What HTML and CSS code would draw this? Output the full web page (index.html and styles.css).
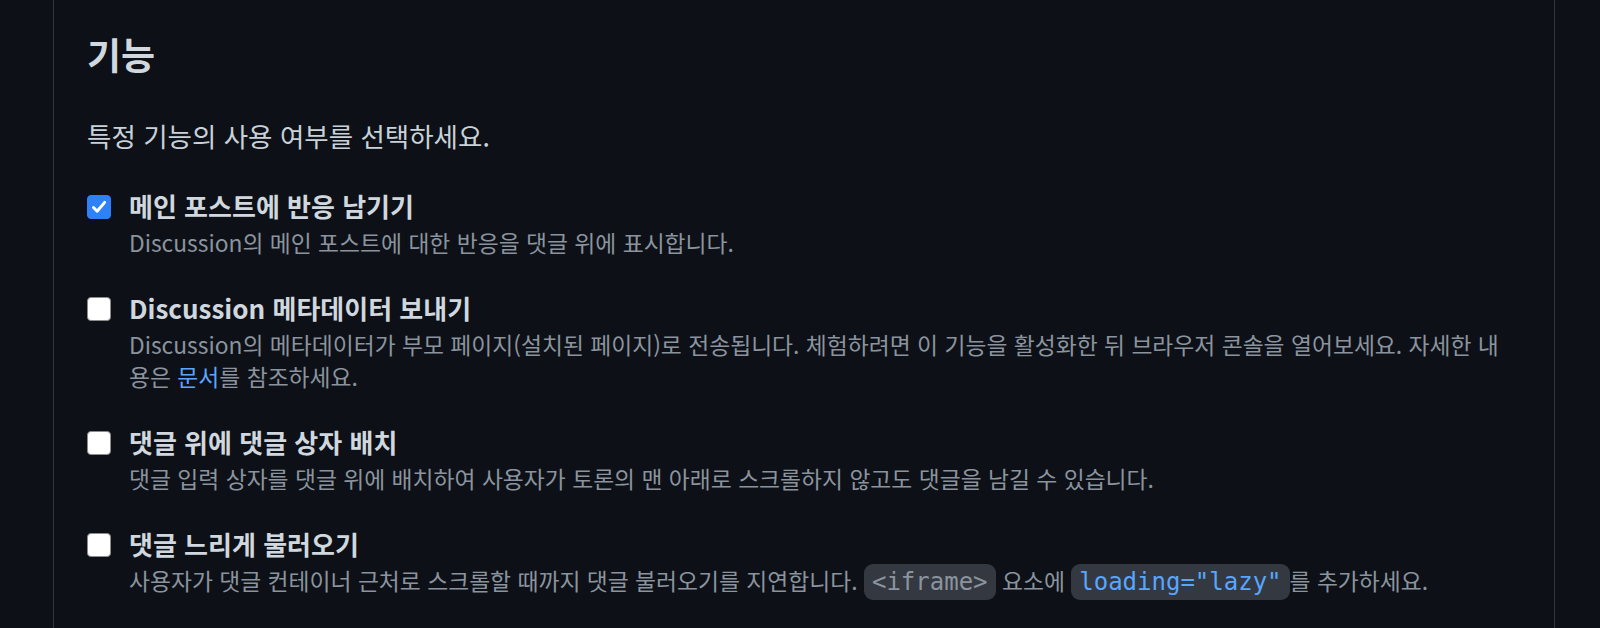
FILE: index.html
```html
<!DOCTYPE html>
<html lang="ko">
<head>
<meta charset="utf-8">
<title>기능</title>
<link rel="stylesheet" href="styles.css">
</head>
<body>
<main class="panel">
  <h2 class="title">기능</h2>
  <p class="intro">특정 기능의 사용 여부를 선택하세요.</p>
  <ul class="options">
    <li class="option">
      <span class="box checked">
        <svg viewBox="0 0 24 24" width="24" height="24" aria-hidden="true"><path d="M6 12.5l4 4.2L18.2 7" fill="none" stroke="#fff" stroke-width="3.2" stroke-linecap="round" stroke-linejoin="round"/></svg>
      </span>
      <div class="text">
        <div class="label">메인 포스트에 반응 남기기</div>
        <div class="desc">Discussion의 메인 포스트에 대한 반응을 댓글 위에 표시합니다.</div>
      </div>
    </li>
    <li class="option">
      <span class="box"></span>
      <div class="text">
        <div class="label">Discussion 메타데이터 보내기</div>
        <div class="desc">Discussion의 메타데이터가 부모 페이지(설치된 페이지)로 전송됩니다. 체험하려면 이 기능을 활성화한 뒤 브라우저 콘솔을 열어보세요. 자세한 내용은 <a class="link" href="#">문서</a>를 참조하세요.</div>
      </div>
    </li>
    <li class="option">
      <span class="box"></span>
      <div class="text">
        <div class="label">댓글 위에 댓글 상자 배치</div>
        <div class="desc">댓글 입력 상자를 댓글 위에 배치하여 사용자가 토론의 맨 아래로 스크롤하지 않고도 댓글을 남길 수 있습니다.</div>
      </div>
    </li>
    <li class="option">
      <span class="box"></span>
      <div class="text">
        <div class="label">댓글 느리게 불러오기</div>
        <div class="desc">사용자가 댓글 컨테이너 근처로 스크롤할 때까지 댓글 불러오기를 지연합니다. <code class="code">&lt;iframe&gt;</code> 요소에 <code class="code code-blue">loading="lazy"</code>를 추가하세요.</div>
      </div>
    </li>
  </ul>
</main>
</body>
</html>
```
FILE: styles.css
```css
html, body {
  margin: 0;
  padding: 0;
  background: #0d1117;
}

body {
  height: 628px;
  overflow: hidden;
  font-family: "Noto Sans CJK KR", "Noto Sans", sans-serif;
  color: #c9d1d9;
}

.panel {
  margin-left: 53px;
  width: 1502px;
  height: 628px;
  box-sizing: border-box;
  border-left: 1px solid #30363d;
  border-right: 1px solid #30363d;
  padding: 0 40px 0 33px;
}

.title {
  margin: 0;
  padding-top: 32px;
  font-size: 37px;
  line-height: 45px;
  font-weight: 600;
  color: #d0d7de;
}

.intro {
  margin: 41px 0 0;
  font-size: 26.5px;
  line-height: 36px;
  color: #c9d1d9;
}

.options {
  list-style: none;
  margin: 34px 0 0;
  padding: 0;
  display: flex;
  flex-direction: column;
  gap: 31px;
}

.option {
  display: flex;
  align-items: flex-start;
  gap: 18px;
}

.box {
  flex: none;
  width: 24px;
  height: 24px;
  margin-top: 7px;
  box-sizing: border-box;
  border: 1.5px solid #8b8b8b;
  border-radius: 4px;
  background: #ffffff;
  display: flex;
  align-items: center;
  justify-content: center;
}

.box.checked {
  background: #2f81f7;
  border-color: #2f81f7;
}

.box svg {
  display: block;
  width: 22px;
  height: 22px;
}

.text {
  flex: 1;
  min-width: 0;
}

.label {
  font-size: 26px;
  line-height: 36px;
  font-weight: 700;
  color: #d0d7de;
}

.desc {
  margin-top: 3px;
  font-size: 22.8px;
  line-height: 32px;
  color: #8b949e;
}

.link {
  color: #58a6ff;
  text-decoration: none;
}

.code {
  font-family: "DejaVu Sans Mono", "Liberation Mono", monospace;
  font-size: 24px;
  padding: 4px 8px;
  border-radius: 9px;
  background: #343941;
  color: #8b949e;
}

.code-blue {
  color: #58a6ff;
}
```
